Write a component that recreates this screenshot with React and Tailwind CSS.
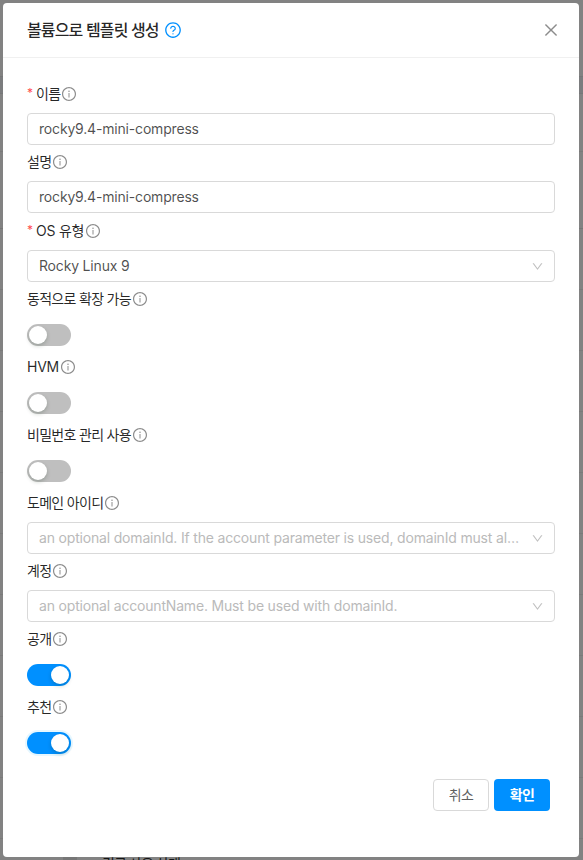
import {
  AiOutlineInfoCircle,
  AiOutlineQuestionCircle,
  AiOutlineClose,
  AiOutlineDown,
} from "react-icons/ai";

const fields = [
  { label: "이름", required: true, type: "input", value: "rocky9.4-mini-compress" },
  { label: "설명", type: "input", value: "rocky9.4-mini-compress", gap: true },
  { label: "OS 유형", latin: true, required: true, type: "select", value: "Rocky Linux 9" },
  { label: "동적으로 확장 가능", type: "switch" },
  { label: "HVM", latin: true, type: "switch" },
  { label: "비밀번호 관리 사용", type: "switch" },
  {
    label: "도메인 아이디",
    type: "select",
    placeholder:
      "an optional domainId. If the account parameter is used, domainId must also be used.",
  },
  {
    label: "계정",
    type: "select",
    placeholder: "an optional accountName. Must be used with domainId.",
  },
  { label: "공개", type: "switch", on: true },
  { label: "추천", type: "switch", on: true, focused: true },
];

function Label({ text, required, latin }) {
  return (
    <div className="flex h-9 items-center pb-0.5 text-black/85">
      {required && (
        <span className="mr-1 w-[5px] pb-[3px] text-[12px] leading-[20px] text-[#ff4d4f]">*</span>
      )}
      <span className={latin ? "tracking-[-0.25px]" : "tracking-[-0.7px]"}>{text}</span>
      <AiOutlineInfoCircle className="ml-px size-4 text-black/45" />
    </div>
  );
}

function Switch({ on, focused }) {
  return (
    <div className="flex h-8 items-center pt-0.5">
      <button
        type="button"
        className={`flex h-[22px] w-11 items-center rounded-full p-0.5 ${
          on ? "justify-end bg-[#0090ff]" : "justify-start bg-[#bfbfbf]"
        } ${focused ? "shadow-[0_0_0_2px_#e6f7ff]" : ""}`}
      >
        <span className="size-[18px] rounded-full bg-white shadow-[0_2px_4px_rgba(0,35,11,0.2)]" />
      </button>
    </div>
  );
}

function Box({ field }) {
  return (
    <div className="flex h-8 items-center rounded border border-[#d9d9d9] bg-white pr-2.5 pl-[11px] tracking-[-0.18px]">
      <span
        className={`min-w-0 flex-1 truncate ${field.value ? "text-black/70" : "text-[#bababa]"}`}
      >
        {field.value || field.placeholder}
      </span>
      {field.type === "select" && (
        <AiOutlineDown className="ml-3 size-[13px] shrink-0 text-black/25" />
      )}
    </div>
  );
}

/* Dimmed table page that shows round the dialog's edges. */
function Backdrop() {
  return (
    <div className="absolute inset-0 flex flex-col bg-[#828282]">
      <div className="h-[76px] shrink-0" />
      <div className="h-[18px] shrink-0 border-y border-[#767778] bg-[#7b7c7e]" />
      <div className="h-[58px] shrink-0 border-b border-[#7a7a7a]" />
      <div className="h-[77px] shrink-0 border-b border-[#767676]" />
      {Array.from({ length: 10 }, (_, i) => (
        <div key={i} className="h-[61px] shrink-0 border-b border-[#7a7a7a]" />
      ))}
      <div className="-mt-px flex h-7 shrink-0 items-start pt-[15px] pl-[63px]">
        <span className="h-4 w-[14px] shrink-0 bg-[#777777]" />
        <span className="ml-[25px] shrink-0 text-[14px] tracking-[-0.9px] whitespace-nowrap text-black/85">
          긴급 사용 상태
        </span>
      </div>
    </div>
  );
}

export default function App() {
  return (
    <div className="relative h-[860px] w-[583px] overflow-hidden bg-[#808080] p-[3px] pr-1 font-['Inter','Noto_Sans_CJK_KR',sans-serif] text-[14px] leading-[22px]">
      <Backdrop />
      <div className="relative flex h-[854px] flex-col rounded bg-white">
        <header className="flex h-[55px] items-center justify-between border-b border-[#f0f0f0] pr-[19px] pl-6">
          <h1 className="flex items-center text-[16px] font-medium tracking-[-0.85px] text-black/85">
            볼륨으로 템플릿 생성
            <AiOutlineQuestionCircle className="ml-[5px] size-[18px] text-[#0090ff]" />
          </h1>
          <AiOutlineClose className="size-[18px] text-black/45" />
        </header>
        <form className="px-6 pt-[19px]">
          {fields.map((f) => (
            <div key={f.label} className={f.gap ? "pb-px" : ""}>
              <Label text={f.label} required={f.required} latin={f.latin} />
              {f.type === "switch" ? <Switch on={f.on} focused={f.focused} /> : <Box field={f} />}
            </div>
          ))}
        </form>
        <footer className="mt-[21px] flex justify-end gap-[5px] pr-[29px] tracking-[-0.6px]">
          <button className="h-8 w-14 rounded border border-[#d9d9d9] text-black/65">취소</button>
          <button className="h-8 w-14 rounded bg-[#0090ff] font-bold text-white">확인</button>
        </footer>
      </div>
    </div>
  );
}
